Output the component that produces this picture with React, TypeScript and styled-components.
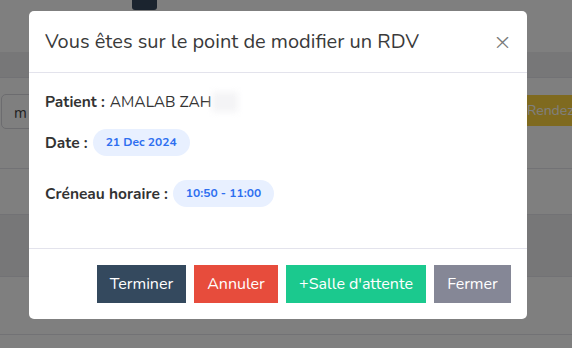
import React from 'react';
import styled, { createGlobalStyle } from 'styled-components';

const GlobalStyle = createGlobalStyle`
  html, body {
    margin: 0;
    padding: 0;
    width: 572px;
    height: 348px;
    overflow: hidden;
    background: #fff;
    font-family: Nunito, Lato, "Noto Sans", sans-serif;
  }
`;

/* page behind the modal */
const Page = styled.div`
  width: 572px;
  height: 348px;
  display: flex;
  flex-direction: column;
  background: #fff;
`;

const TopBar = styled.div`
  height: 52px;
  padding-left: 132px;
`;

const DarkTab = styled.div`
  width: 25px;
  height: 10px;
  background: #37495e;
  border-radius: 0 0 3px 3px;
`;

const Band = styled.div<{ $h: number; $shade?: boolean }>`
  height: ${(p) => p.$h}px;
  background: ${(p) => (p.$shade ? '#efeff1' : '#fff')};
  border-bottom: 1px solid #e4e4ea;
  flex-shrink: 0;
`;

const Toolbar = styled.div`
  height: 54px;
  display: flex;
  justify-content: space-between;
  align-items: flex-start;
  padding-top: 16px;
  flex-shrink: 0;
`;

const SearchBox = styled.div`
  width: 80px;
  height: 35px;
  margin-left: 1px;
  border: 1px solid #d8d8de;
  border-radius: 5px;
  font-size: 15px;
  color: #444;
  padding: 8px 12px;
  box-sizing: border-box;
`;

const GoldButton = styled.div`
  width: 45px;
  height: 31px;
  margin-top: 1px;
  background: #ffd43e;
  color: #fff;
  font-size: 14px;
  line-height: 31px;
  white-space: nowrap;
`;

/* overlay + modal */
const Overlay = styled.div`
  position: fixed;
  inset: 0;
  background: rgba(0, 0, 0, 0.5);
`;

const Dialog = styled.div`
  position: absolute;
  left: 29px;
  top: 11px;
  width: 498px;
  height: 308px;
  background: #fff;
  border-radius: 5px;
  display: flex;
  flex-direction: column;
  color: #333;
`;

const Header = styled.div`
  height: 61px;
  border-bottom: 1px solid #e3e3ec;
  display: flex;
  align-items: center;
  justify-content: space-between;
  padding: 0 16px;
`;

const Title = styled.h5`
  margin: 0;
  font-size: 20px;
  font-weight: 400;
  color: #3a3a3a;
`;

const Close = styled.span`
  font-size: 25px;
  font-weight: 300;
  color: #7a7a7a;
  line-height: 1;
  margin-right: 1px;
`;

const Body = styled.div`
  flex: 1;
  padding: 15px 16px 0;
  border-bottom: 1px solid #e3e3ec;
`;

const Line = styled.div<{ $gap: number }>`
  display: flex;
  align-items: center;
  font-size: 15.5px;
  margin-bottom: ${(p) => p.$gap}px;
  height: 27px;
`;

const Label = styled.b`
  font-weight: 700;
  color: #333;
  margin-right: 5px;
`;

const Blur = styled.span`
  display: inline-block;
  width: 26px;
  height: 20px;
  background: #f4f4f6;
  filter: blur(3px);
`;

const Pill = styled.span`
  display: inline-block;
  height: 27px;
  line-height: 27px;
  padding: 0 13px;
  border-radius: 14px;
  background: #e8f0ff;
  color: #2e6ff0;
  font-size: 12px;
  font-weight: 700;
`;

const Footer = styled.div`
  height: 70px;
  display: flex;
  justify-content: flex-end;
  align-items: center;
  gap: 8px;
  padding: 0 16px;
`;

const Button = styled.button<{ $bg: string; $w: number }>`
  height: 38px;
  width: ${(p) => p.$w}px;
  border: none;
  border-radius: 0;
  background: ${(p) => p.$bg};
  color: #fff;
  font-family: inherit;
  font-size: 16px;
  padding: 0;
`;

export default function App() {
  return (
    <>
      <GlobalStyle />
      <Page>
        <TopBar>
          <DarkTab />
        </TopBar>
        <Band $h={25} $shade />
        <Toolbar>
          <SearchBox>m</SearchBox>
          <GoldButton>Rendez</GoldButton>
        </Toolbar>
        <Band $h={20} />
        <Band $h={45} />
        <Band $h={61} $shade />
        <Band $h={57} />
      </Page>
      <Overlay>
        <Dialog>
          <Header>
            <Title>Vous êtes sur le point de modifier un RDV</Title>
            <Close>×</Close>
          </Header>
          <Body>
            <Line $gap={14}>
              <Label>Patient :</Label>
              AMALAB ZAH
              <Blur />
            </Line>
            <Line $gap={24}>
              <Label>Date :</Label>
              <Pill>21 Dec 2024</Pill>
            </Line>
            <Line $gap={0}>
              <Label>Créneau horaire :</Label>
              <Pill>10:50 - 11:00</Pill>
            </Line>
          </Body>
          <Footer>
            <Button $bg="#34495e" $w={89}>Terminer</Button>
            <Button $bg="#e74c3c" $w={84}>Annuler</Button>
            <Button $bg="#1bc98e" $w={140}>+Salle d'attente</Button>
            <Button $bg="#858796" $w={77}>Fermer</Button>
          </Footer>
        </Dialog>
      </Overlay>
    </>
  );
}
